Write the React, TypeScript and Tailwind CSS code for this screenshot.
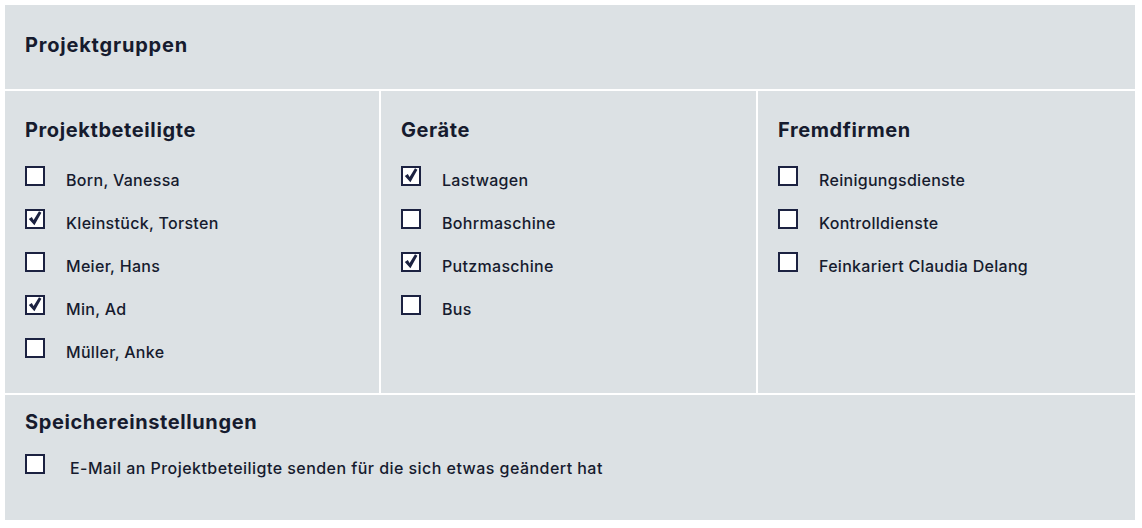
import React from "react";

type Item = { label: string; checked: boolean };

const columns: { title: string; items: Item[] }[] = [
  {
    title: "Projektbeteiligte",
    items: [
      { label: "Born, Vanessa", checked: false },
      { label: "Kleinstück, Torsten", checked: true },
      { label: "Meier, Hans", checked: false },
      { label: "Min, Ad", checked: true },
      { label: "Müller, Anke", checked: false },
    ],
  },
  {
    title: "Geräte",
    items: [
      { label: "Lastwagen", checked: true },
      { label: "Bohrmaschine", checked: false },
      { label: "Putzmaschine", checked: true },
      { label: "Bus", checked: false },
    ],
  },
  {
    title: "Fremdfirmen",
    items: [
      { label: "Reinigungsdienste", checked: false },
      { label: "Kontrolldienste", checked: false },
      { label: "Feinkariert Claudia Delang", checked: false },
    ],
  },
];

function Box({ checked }: { checked: boolean }) {
  return (
    <div className="w-[20px] h-[20px] shrink-0 border-2 border-[#1c2241] bg-white flex items-center justify-center">
      {checked && (
        <svg width="14" height="15" viewBox="0 0 14 15" className="-mt-[2px]">
          <path d="M0.8 8 L3.8 6 L5.6 9 L11 0.3 L13.4 1.8 L6.4 14.2 Z" fill="#1c2241" />
        </svg>
      )}
    </div>
  );
}

export default function App() {
  return (
    <div
      className="w-[1142px] h-[528px] bg-white p-[5px] text-[#161b2e]"
      style={{ fontFamily: "Inter, 'Noto Sans', sans-serif" }}
    >
      <div className="w-[1130px] flex flex-col gap-[2px]">
        <div className="h-[84px] bg-[#dce1e4] px-[20px] pt-[28px]">
          <h1 className="text-[20px] leading-[24px] font-bold tracking-[0.8px]">Projektgruppen</h1>
        </div>
        <div className="grid grid-cols-[374px_375px_377px] gap-[2px] h-[302px]">
          {columns.map((col) => (
            <div key={col.title} className="bg-[#dce1e4] px-[20px] pt-[27px]">
              <h2 className="text-[20px] leading-[24px] font-bold tracking-[0.6px]">{col.title}</h2>
              <div className="mt-[24px] flex flex-col gap-[23px]">
                {col.items.map((it) => (
                  <div key={it.label} className="h-[20px] flex items-start gap-[21px]">
                    <Box checked={it.checked} />
                    <span className="text-[16px] leading-[20px] font-medium tracking-[0.3px] mt-[4px] whitespace-nowrap">
                      {it.label}
                    </span>
                  </div>
                ))}
              </div>
            </div>
          ))}
        </div>
        <div className="h-[125px] bg-[#dce1e4] px-[20px] pt-[15px]">
          <h2 className="text-[20px] leading-[24px] font-bold tracking-[0.6px]">Speichereinstellungen</h2>
          <div className="mt-[20px] h-[20px] flex items-start gap-[25px]">
            <Box checked={false} />
            <span className="text-[16px] leading-[20px] font-medium tracking-[0.45px] mt-[4px] whitespace-nowrap">
              E-Mail an Projektbeteiligte senden für die sich etwas geändert hat
            </span>
          </div>
        </div>
      </div>
    </div>
  );
}
